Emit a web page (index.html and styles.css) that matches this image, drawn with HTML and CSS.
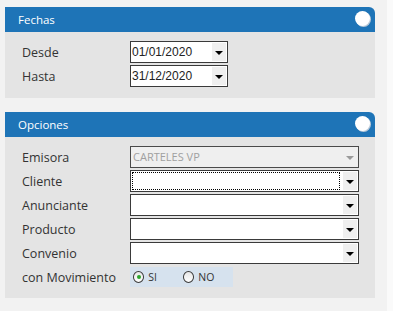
FILE: index.html
```html
<!DOCTYPE html>
<html lang="es">
<head>
    <meta charset="UTF-8">
    <meta name="viewport" content="width=device-width, initial-scale=1.0">
    <title>Filtros</title>
    <link rel="stylesheet" href="styles.css">
</head>
<body>
    <div class="page">
        <div class="panel">
            <div class="panel-head">
                <span class="panel-title">Fechas</span>
                <span class="toggle"></span>
            </div>
            <div class="panel-body">
                <div class="row">
                    <label>Desde</label>
                    <div class="select date"><span class="value">01/01/2020</span><span class="arrow"></span></div>
                </div>
                <div class="row">
                    <label>Hasta</label>
                    <div class="select date"><span class="value">31/12/2020</span><span class="arrow"></span></div>
                </div>
            </div>
        </div>

        <div class="panel">
            <div class="panel-head">
                <span class="panel-title">Opciones</span>
                <span class="toggle"></span>
            </div>
            <div class="panel-body">
                <div class="row">
                    <label>Emisora</label>
                    <div class="select wide disabled"><span class="value">CARTELES VP</span><span class="arrow"></span></div>
                </div>
                <div class="row">
                    <label>Cliente</label>
                    <div class="select wide focused"><span class="value"></span><span class="arrow"></span></div>
                </div>
                <div class="row">
                    <label>Anunciante</label>
                    <div class="select wide"><span class="value"></span><span class="arrow"></span></div>
                </div>
                <div class="row">
                    <label>Producto</label>
                    <div class="select wide"><span class="value"></span><span class="arrow"></span></div>
                </div>
                <div class="row">
                    <label>Convenio</label>
                    <div class="select wide"><span class="value"></span><span class="arrow"></span></div>
                </div>
                <div class="row radio-row">
                    <label>con Movimiento</label>
                    <div class="radios">
                        <span class="radio checked"></span><span class="radio-text">SI</span>
                        <span class="radio"></span><span class="radio-text">NO</span>
                    </div>
                </div>
            </div>
        </div>
    </div>
</body>
</html>
```
FILE: styles.css
```css
body {
    margin: 0;
    background-color: #fafafa;
    font-family: "Open Sans", Arial, sans-serif;
}
.page {
    width: 387px;
    height: 311px;
    background-color: #f2f2f2;
    padding: 7px 0 0 5px;
    box-sizing: border-box;
}
.panel {
    width: 370px;
    margin-bottom: 14px;
}
.panel-head {
    height: 25px;
    background-color: #1e74b7;
    border-radius: 0 6px 0 0;
    display: flex;
    align-items: center;
    justify-content: space-between;
    padding: 0 5px 0 13px;
}
.panel-title {
    color: #fff;
    font-size: 11.5px;
}
.toggle {
    width: 15px;
    height: 15px;
    border-radius: 50%;
    background: #fff;
    box-shadow: 1px 1px 0 #b9c9d8;
    margin-top: -2px;
}
.panel-body {
    background-color: #e4e4e4;
    padding: 9px 16px 11px 17px;
    display: flex;
    flex-direction: column;
    gap: 2px;
}
.row {
    display: flex;
    align-items: center;
    height: 22px;
}
.row label {
    width: 108px;
    font-size: 12.5px;
    color: #333;
}
.select {
    height: 22px;
    box-sizing: border-box;
    border: 1px solid #3a3a3a;
    background: #fff;
    display: flex;
    align-items: stretch;
}
.select.date {
    width: 98px;
}
.select.wide {
    width: 229px;
}
.value {
    flex: 1;
    font-family: "Liberation Sans", Arial, sans-serif;
    font-size: 12px;
    color: #222;
    line-height: 20px;
    padding-left: 1px;
}
.arrow {
    width: 14px;
    background: #efefef;
    position: relative;
    margin: 1px;
}
.arrow::after {
    content: "";
    position: absolute;
    left: 3px;
    top: 8px;
    border-left: 4px solid transparent;
    border-right: 4px solid transparent;
    border-top: 4px solid #000;
}
.disabled {
    background: #efefef;
    border-color: #4a4a4a;
}
.disabled .value {
    font-family: "Open Sans", Arial, sans-serif;
    font-size: 11px;
    color: #a0a0a0;
    padding-left: 2px;
}
.disabled .arrow::after {
    border-top-color: #9a9a9a;
}
.focused .value {
    margin: 1px 2px 1px 1px;
    border: 1px dotted #000;
}
.radio-row {
    height: 20px;
    margin-top: 1px;
}
.radios {
    width: 103px;
    height: 20px;
    background: #d6e2ee;
    display: flex;
    align-items: center;
    padding-left: 3px;
    box-sizing: border-box;
    font-size: 10.5px;
    color: #333;
}
.radio {
    width: 10px;
    height: 10px;
    border-radius: 50%;
    border: 1px solid #3a3a3a;
    background: linear-gradient(#e6e6e6, #fff);
    position: relative;
}
.radio.checked::after {
    content: "";
    position: absolute;
    left: 3px;
    top: 3px;
    width: 4px;
    height: 4px;
    border-radius: 50%;
    background: #2ca52c;
}
.radio-text {
    margin-left: 4px;
    width: 37px;
}
```
